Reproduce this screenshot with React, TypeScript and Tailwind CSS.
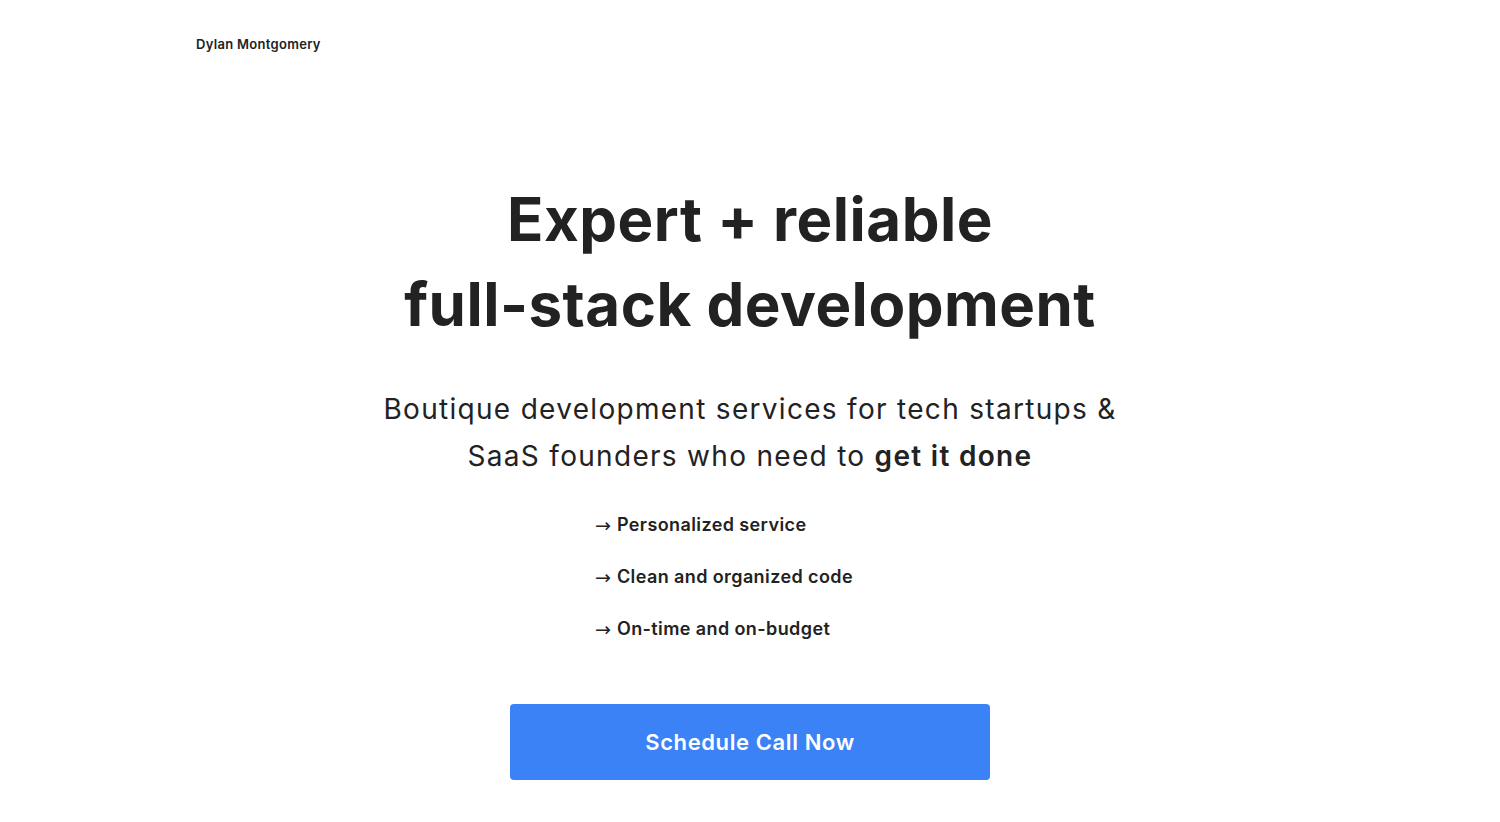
import React from "react";

export default function App() {
  const items = ["Personalized service", "Clean and organized code", "On-time and on-budget"];
  return (
    <div className="min-h-[822px] w-full bg-white text-[#222222]" style={{ fontFamily: "Inter, 'Noto Sans', sans-serif" }}>
      <header className="pl-[196px] pt-[36px] text-[13px] font-semibold leading-[16px] tracking-[0.3px] text-[#222222]">
        Dylan Montgomery
      </header>
      <main className="flex flex-col items-center">
        <h1 className="mt-[125px] text-center text-[60px] font-bold leading-[85px] tracking-[0.5px] text-[#222222]">
          Expert + reliable
          <br />
          full-stack development
        </h1>
        <p className="mt-[39px] text-center text-[28px] font-normal leading-[47px] tracking-[1.3px] text-[#222222]">
          Boutique development services for tech startups &amp;
          <br />
          SaaS founders who need to <span className="font-semibold">get it done</span>
        </p>
        <ul className="mt-[33px] flex w-[310px] flex-col gap-[28px]">
          {items.map((t) => (
            <li key={t} className="flex h-[24px] items-center text-[18px] font-semibold leading-[24px] tracking-[0.4px] text-[#222222]">
              <span className="font-['DejaVu_Sans',sans-serif] text-[19px] leading-none font-normal tracking-normal">→</span>
              <span className="ml-[6px]">{t}</span>
            </li>
          ))}
        </ul>
        <button className="mt-[63px] h-[76px] w-[480px] rounded-[4px] bg-[#3b82f6] text-[22px] font-semibold tracking-[0.6px] text-white">
          Schedule Call Now
        </button>
      </main>
    </div>
  );
}
